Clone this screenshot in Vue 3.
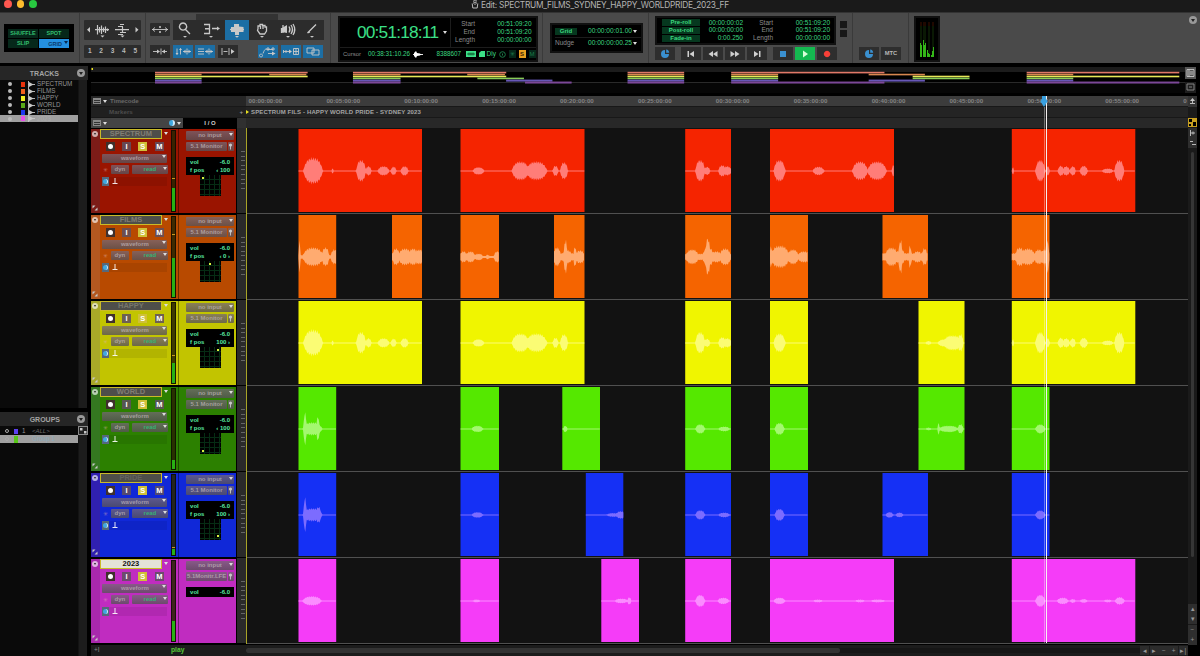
<template>
  <div class="app">
    <header class="titlebar">
      <div class="lights"><i class="close"></i><i class="min"></i><i class="max"></i></div>
      <div class="title">
        <svg width="8" height="9" viewBox="0 0 8 9"><path d="M2 1.5 L3 .7 L6 1 M2 3.2 Q4 1.8 6 3.2 M1.2 3.5 L1.8 8 H6.2 L6.8 3.5 M4 3.6 V5" class="ln" /></svg>
        <span>Edit: SPECTRUM_FILMS_SYDNEY_HAPPY_WORLDPRIDE_2023_FF</span>
      </div>
    </header>

    <section class="toolbar">
      <div class="sec sec-modes">
        <div class="modes">
          <div class="mode">SHUFFLE</div>
          <div class="mode">SPOT</div>
          <div class="mode">SLIP</div>
          <div class="mode on">GRID<b class="caret dark"></b></div>
        </div>
      </div>

      <div class="sec sec-zoom">
        <div class="panel zoom-row">
          <svg width="57" height="19" viewBox="0 0 57 19">
            <path d="M6 7 L3 9.7 L6 12.4Z M51.5 7 L54.5 9.7 L51.5 12.4Z M16.5 15.5 h4 l-2 2Z M36.5 15.5 h4 l-2 2Z" class="fl" />
            <path d="M11 9.7 H25 M13.5 5 V14.5 M15.5 7 V12.5 M17.5 5.5 V14 M19.5 7.5 V12 M21.5 6.5 V13 M23.5 8.5 V11" class="ln heavy" />
            <path d="M31 9.7 H45 M34 6.5 H39 M36 4.5 H40 M36 12.5 H42 M34 14.5 H39 M38.5 7 V12" class="ln heavy" />
          </svg>
        </div>
        <div class="panel presets"><span v-for="n in 5" :key="n">{{ n }}</span></div>
      </div>

      <div class="sec sec-tools">
        <div class="tool-row">
          <div class="panel zoomer">
            <svg width="20" height="13" viewBox="0 0 20 13"><path d="M2 6.5 H18 M5 4.5 L2.5 6.5 L5 8.5 M15 4.5 L17.5 6.5 L15 8.5" class="ln" /><circle cx="10" cy="4" r="1" class="fl" /><circle cx="10" cy="9" r="1" class="fl" /></svg>
          </div>
          <div class="tools">
            <div v-for="t in tools" :key="t.name" class="tool" :class="[t.name, { on: t.on }]">
              <svg width="22" height="19" viewBox="0 0 22 19">
                <path :d="t.line" class="ln thick" />
                <path v-if="t.fill" :d="t.fill" class="fl" />
                <path d="M9 16 h4 l-2 1.8Z" class="fl" />
              </svg>
            </div>
          </div>
        </div>
        <div class="option-row">
          <div v-for="(o, i) in options" :key="i" class="option" :class="{ on: o.on, gap: i === 4 }">
            <svg width="20" height="13" viewBox="0 0 20 13">
              <path :d="o.line" class="ln" />
              <path v-if="o.fill" :d="o.fill" class="fl" />
            </svg>
          </div>
        </div>
      </div>

      <div class="sec sec-counter">
        <div class="counter">
          <div class="counter-top">
            <div class="main-time">00:51:18:11<b class="caret"></b></div>
            <div class="range">
              <span>Start</span><em>00:51:09:20</em>
              <span>End</span><em>00:51:09:20</em>
              <span>Length</span><em>00:00:00:00</em>
            </div>
          </div>
          <div class="counter-bottom">
            <span class="dim">Cursor</span>
            <em class="cursor-time">00:38:31:10.26</em>
            <svg width="11" height="7" viewBox="0 0 11 7"><path d="M0 3.5 H10" class="ln white" /><path d="M1 2 L3 0 L4 2 L7 2.5 L8 3.5 L7 4.5 L4 5 L3 7 L1 5Z" class="fl white" /></svg>
            <em class="samples">8388607</em>
            <i class="chip"><svg width="10" height="6" viewBox="0 0 10 6"><path d="M1 3 H9 M3 1.5 V4.5 M5 1.5 V4.5 M7 1.5 V4.5" /></svg></i>
            <i class="chip page"></i>
            <em class="dly">Dly</em>
            <svg width="7" height="7" viewBox="0 0 7 7"><circle cx="3.5" cy="3.5" r="2.8" class="gr" /><path d="M3.5 2.5 V4.5" class="gr" /></svg>
            <i class="flag">✳</i>
            <i class="flag solo">S</i>
            <i class="flag">M</i>
          </div>
        </div>
      </div>

      <div class="sec sec-grid">
        <div class="grid-box">
          <div class="grid-line"><b class="pill">Grid</b><em>00:00:00:01.00</em><b class="caret"></b></div>
          <div class="grid-line"><span>Nudge</span><em>00:00:00:00.25</em><b class="caret"></b></div>
        </div>
      </div>

      <div class="sec sec-transport">
        <div class="roll-row">
          <div class="roll">
            <b>Pre-roll</b><em>00:00:00:02</em><span>Start</span><em>00:51:09:20</em>
            <b>Post-roll</b><em>00:00:00:00</em><span>End</span><em>00:51:09:20</em>
            <b>Fade-in</b><em>0:00.250</em><span>Length</span><em>00:00:00:00</em>
          </div>
          <div class="squares"><i></i><i></i></div>
        </div>
        <div class="transport">
          <div v-for="b in transport" :key="b.name" class="tbtn" :class="b.name">
            <svg width="12" height="10" viewBox="0 0 12 10"><path :d="b.d" /></svg>
          </div>
        </div>
      </div>

      <div class="sec sec-mtc">
        <div class="tbtn sync"><svg width="12" height="10" viewBox="0 0 12 10"><path :d="clock" /></svg></div>
        <div class="tbtn">MTC</div>
      </div>

      <div class="sec sec-meter">
        <div class="out-meter">
          <i v-for="(h, i) in outLevels" :key="i"><u :style="{ height: h + 'px' }"></u></i>
        </div>
        <div class="round"><b class="caret"></b></div>
      </div>
    </section>

    <main class="main">
      <aside class="sidebar">
        <div class="side-col tracks-col">
          <div class="side-head">TRACKS<div class="round"><b class="caret"></b></div></div>
          <div class="side-list">
            <div v-for="t in tracks" :key="t.name" class="side-item" :class="{ sel: t.selected }">
              <i class="dot"></i>
              <i class="swatch" :style="{ background: t.list }"></i>
              <svg width="7" height="7" viewBox="0 0 7 7"><path d="M.5 0 V7 M0 3.5 H7" class="ln" /><path d="M1 1 L5.5 3.5 L1 6Z" class="fl" /></svg>
              <span>{{ t.name }}</span>
            </div>
          </div>
        </div>
        <div class="side-col groups-col">
          <div class="side-head">GROUPS<div class="round"><b class="caret"></b></div></div>
          <div class="group-wrap">
            <div class="side-list">
              <div class="side-item group"><i class="ring"></i><i class="swatch violet"></i><span class="key">1</span><span class="all">&lt;ALL&gt;</span></div>
              <div class="side-item group sel"><i class="ring"></i><i class="swatch green"></i><span class="key"></span><span class="g1">Group 1</span></div>
            </div>
            <svg class="az" width="10" height="9" viewBox="0 0 10 9"><rect x=".5" y=".5" width="9" height="8" class="box" /><path d="M2 2 h2.5 v2.5 h-2.5Z M6 5 h2.5 v2.5 h-2.5Z" class="fl" /></svg>
          </div>
        </div>
      </aside>

      <section class="edit">
        <div class="overview">
          <svg width="1094" height="26" viewBox="91 67 1094 26">
            <rect x="91" y="67" width="1094" height="5" class="ov-top" />
            <rect x="91" y="82" width="1094" height="11" class="ov-low" />
            <path d="M91 82.5 H1185" class="ov-line" />
            <path d="M91.5 68 h1.500 v2 h-1.500Z" class="ov-mark" />
            <template v-for="(t, i) in tracks" :key="t.name">
              <rect
                v-for="c in t.clips"
                :key="c.x"
                :x="overviewX(c.x)"
                :y="71.8 + i * 1.95"
                :width="c.w * overviewScale"
                :height="i > 3 ? 2 : 1.6"
                :fill="t.mini"
              />
            </template>
          </svg>
          <div class="ov-buttons">
            <div class="ov-btn"><svg width="11" height="12" viewBox="0 0 11 12"><path d="M2 2.5 H9 V9.5 H2Z M4 2.5 V9.5 M5 5 H8 M5 7 H8" class="ln" /></svg></div>
            <div class="ov-btn off"><svg width="11" height="10" viewBox="0 0 11 10"><path d="M2 2 H9 V8 H2Z M4 5 H7" class="ln" /></svg></div>
          </div>
        </div>

        <div class="workspace">
          <div class="board">
            <div class="ruler-row">
              <div class="ruler-name"><i class="listicon"></i><b class="caret"></b><span>Timecode</span></div>
              <div class="ticks"><span v-for="r in ruler" :key="r">{{ r }}</span></div>
            </div>
            <div class="ruler-row markers">
              <div class="ruler-name"><span>Markers</span><em>+</em></div>
              <div class="marker"><i></i><span>SPECTRUM FILS - HAPPY WORLD PRIDE - SYDNEY 2023</span></div>
            </div>
            <div class="head-row">
              <div class="head-left"><i class="listicon"></i><b class="caret"></b><i class="clock"></i><b class="caret"></b></div>
              <div class="head-io">I / O</div>
              <div class="head-rest"></div>
            </div>

            <div v-for="t in tracks" :key="t.name" class="track" :class="t.cls">
              <div class="strip">
                <div class="round small"><b class="caret"></b></div>
                <svg width="6" height="6" viewBox="0 0 6 6"><path d="M.5 .5 h3 l-3 3Z M5.5 5.5 h-3 l3 -3Z" class="fl" /></svg>
              </div>
              <div class="controls">
                <div class="name-row"><div class="name">{{ t.name }}</div><b class="caret"></b></div>
                <div class="rec-row">
                  <div class="sq rec"><i></i></div>
                  <div class="sq">I</div>
                  <div class="sq solo">S</div>
                  <div class="sq">M</div>
                </div>
                <div class="soft view">waveform<b class="caret"></b></div>
                <div class="auto-row">
                  <i class="star">✳</i>
                  <div class="soft dyn">dyn</div>
                  <div class="soft read">read<b class="caret"></b></div>
                </div>
                <div class="elastic">
                  <i class="clock-box"><i class="clock"></i></i>
                  <svg width="6" height="7" viewBox="0 0 6 7"><path d="M3 0 V5 M.5 5.5 H5.5" class="ln white" /></svg>
                </div>
              </div>
              <div class="meter">
                <div class="meter-bar">
                  <i class="peak" :style="{ top: t.peak + 'px' }"></i>
                  <i class="level" :style="{ height: t.level + 'px' }"></i>
                </div>
              </div>
              <div class="io">
                <div class="soft io-btn">no input<b class="caret"></b></div>
                <div class="io-out"><div class="soft io-btn">{{ t.output }}</div><div class="soft pin"><svg width="5" height="7" viewBox="0 0 5 7"><path d="M2.5 3 V6.5" class="ln" /><circle cx="2.5" cy="2" r="1.6" class="fl" /></svg></div></div>
                <div class="lcd">
                  <div><span>vol</span><span>-6.0</span></div>
                  <div v-if="t.pan"><span>f pos</span><span>{{ t.pan }}</span></div>
                </div>
                <div v-if="t.pan" class="panner"><i :style="{ left: t.px + 'px', top: t.py + 'px' }"></i></div>
              </div>
              <div class="scale"><i></i></div>
              <svg class="lane" width="942" height="86" viewBox="246 0 942 86">
                <g v-for="c in t.clips" :key="c.x">
                  <rect :x="c.x" y="1" :width="c.w" height="83" :fill="t.clip" />
                  <path :d="wave(c)" :fill="t.wave" />
                </g>
                <path d="M246 85.5 H1188" class="lane-line" />
                <path d="M246.5 0 V86" class="start-line" />
              </svg>
            </div>

            <div class="footer">
              <div class="foot-plus">+I</div>
              <div class="play">play</div>
              <div class="hscroll"><i></i></div>
              <div class="foot-btns"><span>◂</span><span>▸</span><span>−</span><span>+</span><span>▸|</span></div>
            </div>
            <div class="playhead">
              <svg width="8" height="11" viewBox="0 0 8 11"><path d="M2 0 H6 V2.5 L7.5 5.5 L4 11 L.5 5.5 L2 2.5Z" /></svg>
            </div>
          </div>

          <div class="rail">
            <div class="rail-top"><svg width="9" height="10" viewBox="0 0 9 10"><path d="M4.5 2 L7 5 H2Z" class="fl" /><path d="M4.5 4 V7 M2 7.5 H7" class="ln" /></svg></div>
            <svg class="rail-key" width="9" height="9" viewBox="0 0 9 9"><rect width="9" height="9" /><path d="M1 1 h3 v3 h-3Z M5 4 h3 v4 h-3Z M1 6 h2 v2 h-2Z" /></svg>
            <div class="rail-btn"><svg width="9" height="10" viewBox="0 0 9 10"><path d="M2.5 2 V8 M2.5 5 H7 M5 3.5 V6.500" class="ln" /></svg></div>
            <div class="rail-btn"><svg width="9" height="10" viewBox="0 0 9 10"><path d="M2 3.500 H5 M4 6.500 H8" class="ln" /></svg></div>
            <div class="vscroll"><i></i></div>
            <div class="rail-btn">▴</div>
            <div class="rail-btn">▾</div>
            <div class="rail-btn">−</div>
            <div class="rail-btn">+</div>
          </div>
        </div>
      </section>
    </main>
  </div>
</template>

<script setup>
const clock = "M6 1 A4 4 0 1 0 10 5 H6Z M7.2 .6 A3.5 3.5 0 0 1 10.2 3.8 H7.2Z";

const tools = [
  { name: "magnify", line: "M9 3 a3.6 3.6 0 1 0 .1 0Z M11.5 9.5 L16 14" },
  { name: "trim", line: "M4 4.5 H9.5 V13.5 H4 M17 8.5 H12", fill: "M17 6.5 L20 8.5 L17 10.5Z M5 8 H9 V9.5 H5Z" },
  { name: "select", line: "M4 9.5 H18", fill: "M5 7 H8 V4 H13 V6.5 L17.5 7 V12 H13 V15 H9 V12 H5Z", on: true },
  { name: "grab", line: "M7 9 V6 H9 V4.5 H11.5 V5.5 H14 V7 H15.5 V11 L13.5 14 H9 L6.5 10.5 L7 9 M9.5 6 V9 M12 6 V9" },
  { name: "scrub", line: "M6 5 V13 M8 7 V12 M4.5 8 V13 M12 6.5 Q14 9.5 12 12.5 M14 5 Q17 9.5 14 14 M16 4 Q19.5 9.5 16 15", fill: "M5 8 L10 5 V13 L5 12Z" },
  { name: "pencil", line: "M6.500 13 L15 4.500 M6.500 13 L9 12" },
];

const options = [
  { line: "M3 6.5 H8 M12 6.5 H17 M11 3.5 V9.5", fill: "M7 4.5 L10 6.5 L7 8.5Z M15 4.5 L12 6.5 L15 8.5Z" },
  { line: "M4 3.5 V9.5 M7.5 3.5 V9.5 M14 3.5 V9.5 M10 6.5 H18", fill: "M2.5 8 H5.5 L4 10Z M6 5 H9 L7.5 3Z M12.5 4.5 V8.5 L10.5 6.5Z M15.5 4.5 V8.5 L17.5 6.5Z", on: true },
  { line: "M3 4 H9 M3 6.5 H9 M3 9 H9 M14 3.5 V9.5 M10 6.5 H18", fill: "M12.5 4.5 V8.5 L10.5 6.5Z M15.5 4.5 V8.5 L17.5 6.5Z", on: true },
  { line: "M4 3 V10 M11 3 V10 M5.5 6.5 H9.5", fill: "M13 4 L16.5 6.5 L13 9Z" },
  { line: "M3 9 a1.5 1.5 0 1 0 .1 0 M5 8.5 C7 3 8 4 9.5 4.5 H15 M9 3 h2 v2 h-2Z M14 3 h2 v2 h-2Z M10 8.5 H16", fill: "M14 6.5 L17.5 8.5 L14 10.5Z", on: true },
  { line: "M2.5 6.5 H9 M2.5 5 V8 M5 5 V8 M12.5 3.5 h5 v6 h-5Z M12.5 6.5 h5 M15 3.5 v6", fill: "M8 4.5 L11 6.5 L8 8.5Z", on: true },
  { line: "M4 3 H11 V8 H4Z M9 5 H16 V10 H9Z", on: true },
];

const transport = [
  { name: "sync", d: clock },
  { name: "start", d: "M2.5 2 H4 V8 H2.5Z M9 2 V8 L4.5 5Z" },
  { name: "rew", d: "M6 2 V8 L1.5 5Z M10.5 2 V8 L6 5Z" },
  { name: "ffw", d: "M1.5 2 L6 5 L1.5 8Z M6 2 L10.5 5 L6 8Z" },
  { name: "end", d: "M3 2 L7.5 5 L3 8Z M8 2 H9.5 V8 H8Z" },
  { name: "stop", d: "M3 2 H9 V8 H3Z" },
  { name: "playbtn", d: "M4 1.5 L9 5 L4 8.5Z" },
  { name: "record", d: "M6 1.8 a3.2 3.2 0 1 0 .1 0Z" },
];

const outLevels = [14, 12, 17, 12, 14, 7, 4, 3, 2, 6, 10];

const ruler = [];
for (let m = 0; m < 60; m += 5) {
  ruler.push(`00:${String(m).padStart(2, "0")}:00:00`);
}
ruler.push("0");

// Each peak is [offset from the clip start, half width, amplitude]
const clip = (x, end, peaks, base = 0.5) => ({ x, w: end - x, peaks, base });

const phraseA = [[14.5, 10, 14], [34, 1, 3], [62.5, 5, 11.5], [70, 3, 5], [85, 6, 5], [95, 3, 4.5], [106, 4, 5]];
const phraseB = [[18, 6, 4], [60, 9, 10], [76, 11, 10], [95, 3, 5.5], [103.5, 4, 9]];
const phraseC = [[15, 5, 11.5], [22, 3, 4.5], [37, 4, 6], [42, 4, 5], [46, 1, 4]];
const phraseE = [[1, 1, 4], [28.5, 5, 11.5], [36, 2, 5], [49, 3, 5.5], [54.5, 3.5, 5], [61, 3, 5], [72, 4, 5.5], [96, 6, 2.5], [107.5, 5, 11.5]];

const tracks = [
  {
    name: "SPECTRUM", cls: "red", list: "#e8320c", clip: "#f52400", wave: "#ff7d78", mini: "#e07868",
    level: 23, peak: 47, output: "5.1 Monitor", pan: "‹ 100", px: 2, py: 2,
    clips: [
      clip(298.5, 422, phraseA),
      clip(460.5, 584.5, phraseB),
      clip(685.2, 731, phraseC),
      clip(770, 894, [[9.5, 6, 11.5], [48.5, 6, 4.5], [90, 8, 10], [107, 10, 10], [123.5, 2, 6]]),
      clip(1011.8, 1135.3, phraseE),
    ],
  },
  {
    name: "FILMS", cls: "orange", list: "#f0601c", clip: "#f56400", wave: "#ffab70", mini: "#d88850",
    level: 39, peak: 17, output: "5.1 Monitor", pan: "‹ 0 ›", px: 9, py: 2,
    clips: [
      clip(298.5, 336.2, [[1, 1, 17], [14.5, 11, 10], [27, 4, 10], [36, 4, 8]], 2),
      clip(392, 422, [[4, 4, 9], [13, 7, 9], [21, 5, 9], [27, 6, 8]], 4),
      clip(460.5, 499, [[3, 4, 6], [10, 5, 6], [18, 5, 3.5], [27, 2, 2.5], [37, 4, 6]], 1),
      clip(554, 584.5, [[3, 4, 10], [11.5, 1.8, 18], [13, 6, 7], [21, 1.5, 11], [26, 5, 7]], 4),
      clip(685.2, 731, [[7, 7, 8], [23, 6, 10], [22.5, 2.5, 20], [31, 6, 6], [40, 6, 9]], 3.5),
      clip(770, 808, [[1, 1.5, 11], [10, 10, 12], [23, 6, 8], [34, 7, 6]], 3),
      clip(882.5, 928, [[9, 7, 10], [18, 2, 18], [18, 5, 8], [27.5, 1.5, 12], [35, 5, 6], [42, 3, 9]], 4),
      clip(1011.8, 1049.5, [[8, 5, 10], [16, 8, 9], [27, 5, 8], [35.5, 1.8, 18], [33, 5, 8]], 4),
    ],
  },
  {
    name: "HAPPY", cls: "yellow", list: "#f0ee20", clip: "#f0f500", wave: "#fbfc74", mini: "#e8e858",
    level: 20, peak: 52, output: "5.1 Monitor", pan: "100 ›", px: 17, py: 2,
    clips: [
      clip(298.5, 422, phraseA),
      clip(460.5, 584.5, phraseB),
      clip(685.2, 731, phraseC),
      clip(770, 808, [[9.5, 6, 10]]),
      clip(918.5, 964.5, [[10, 3, 2], [26, 7, 4], [34, 10, 8], [42, 3, 9]]),
      clip(1011.8, 1135.3, phraseE),
    ],
  },
  {
    name: "WORLD", cls: "lime", list: "#58a818", clip: "#55e800", wave: "#a4f870", mini: "#88cc58",
    level: 9, peak: 71, output: "5.1 Monitor", pan: "‹ 100", px: 2, py: 17,
    clips: [
      clip(298.5, 336.2, [[14, 10, 7], [6.5, 1.7, 17], [19.5, 1.7, 13]]),
      clip(460.5, 499, [[17, 6, 3.5]]),
      clip(562.3, 600, [[3, 2, 3.5]]),
      clip(685.2, 731, [[15, 5, 5], [39, 6, 2.5]]),
      clip(770, 808, [[9.5, 5, 6.5]]),
      clip(918.5, 964.5, [[10, 3, 1.5], [20, 1.2, 6], [30, 10, 3.5], [42, 3, 5]]),
      clip(1011.8, 1049.5, [[28.5, 5, 5]]),
    ],
  },
  {
    name: "PRIDE", cls: "blue", list: "#2038f0", clip: "#1530f5", wave: "#7c6cff", mini: "#6858b8",
    level: 6, peak: 72, output: "5.1 Monitor", pan: "100 ›", px: 17, py: 16,
    clips: [
      clip(298.5, 336.2, [[14, 10, 7], [6.5, 1.7, 18], [20, 3, 8.5]]),
      clip(460.5, 499, [[17, 6, 3]]),
      clip(585.8, 623.3, [[28, 8, 2], [35, 5, 4]]),
      clip(685.2, 731, [[15, 5, 5], [39, 6, 2.5]]),
      clip(770, 808, [[9.5, 5, 6.5]]),
      clip(882.5, 928, [[7, 4, 3], [17, 4, 2.5]]),
      clip(1011.8, 1049.5, [[28.5, 5, 5]]),
    ],
  },
  {
    name: "2023", cls: "pink", list: "#e850e8", clip: "#f53cf8", wave: "#fb8cff", mini: "#7c4898", selected: true,
    level: 20, peak: 61, output: "5.1Monitr.LFE", pan: "",
    clips: [
      clip(298.5, 336.2, [[13.5, 10, 5]]),
      clip(460.5, 499, [[16, 4, 1.5]]),
      clip(601.3, 639, [[20, 7, 2.5], [28, 2, 4]]),
      clip(685.2, 731, [[15, 5, 6.5], [38, 6, 3.5]]),
      clip(770, 894, [[9.5, 6, 3.5], [48, 5, 1.5], [90, 5, 1.5], [108, 8, 1.5]]),
      clip(1011.8, 1135.3, [[28.5, 5, 6.5], [51, 6, 3.5], [61, 3, 2], [72, 4, 2], [96, 4, 1.5], [108, 5, 4]]),
    ],
  },
];

const overviewScale = 1.236;
const overviewX = (x) => 155 + (x - 298.5) * 1.222;

// Builds the mirrored envelope of a clip around the middle of the lane
function wave(c) {
  const up = [];
  const down = [];
  for (let d = 0; d <= c.w; d += 0.75) {
    let amp = c.base;
    for (const [at, half, height] of c.peaks) {
      const k = Math.abs(d - at) / half;
      if (k < 1) amp = Math.max(amp, height * (1 - k * k * k));
    }
    const noise = 0.86 + 0.14 * Math.sin(d * 5.3 + c.x);
    const a = amp > 1 ? amp * noise : amp;
    const x = (c.x + d).toFixed(1);
    up.push(`${x} ${(43 - a).toFixed(1)}`);
    down.unshift(`${x} ${(43 + a * 0.96).toFixed(1)}`);
  }
  return `M${up.join("L")}L${down.join("L")}Z`;
}
</script>

<style>
body {
  background: #000;
}
</style>

<style scoped>
* {
  box-sizing: border-box;
}

i,
em {
  font-style: normal;
}

svg {
  display: block;
  flex: none;
}

.app {
  width: 1200px;
  height: 656px;
  background: #000;
  color: #b8b8b8;
  font-family: "Liberation Sans", Arial, sans-serif;
  font-size: 6.5px;
  line-height: 1;
  overflow: hidden;
  position: relative;
  white-space: nowrap;
}

.ln {
  fill: none;
  stroke: #c8c8c8;
  stroke-width: 0.9;
}

.ln.thick {
  stroke-width: 1.3;
}

.ln.heavy {
  stroke-width: 1.2;
}

.ln.white {
  stroke: #fff;
}

.fl {
  fill: #c8c8c8;
}

.fl.white {
  fill: #fff;
}

.gr {
  fill: none;
  stroke: #1c7a48;
}

.caret {
  width: 0;
  height: 0;
  border: 2.3px solid transparent;
  border-top: 3px solid #ddd;
  border-bottom: 0;
  flex: none;
}

.caret.dark {
  border-top-color: #0a2a50;
}

.round {
  width: 8px;
  height: 8px;
  border-radius: 50%;
  background: #999;
  display: flex;
  align-items: center;
  justify-content: center;
  flex: none;
}

.round .caret {
  border-top-color: #222;
}

.round.small {
  width: 6px;
  height: 6px;
}

/* title bar */
.titlebar {
  height: 12px;
  background: #1a1a1a;
  display: flex;
  align-items: flex-start;
}

.lights {
  width: 471px;
  padding-left: 4px;
  display: flex;
  gap: 5px;
}

.lights i {
  width: 7.5px;
  height: 8px;
  border-radius: 50%;
}

.close {
  background: #ff5850;
}

.min {
  background: #febc2e;
}

.max {
  background: #28c840;
}

.title {
  display: flex;
  gap: 2px;
  font-family: Inter, "Liberation Sans", sans-serif;
  font-size: 8.3px;
  letter-spacing: -0.24px;
  line-height: 10px;
  color: #b4b4b4;
}

/* toolbar */
.toolbar {
  height: 51px;
  background: #4a4a4a;
  display: flex;
  border-top: 1px solid #333;
}

.sec {
  border-right: 1px solid #3a3a3a;
  flex: none;
}

.panel {
  background: #2c2c2c;
  border-radius: 1px;
}

.sec-modes {
  width: 80px;
  padding: 11px 0 0 4px;
}

.modes {
  width: 70px;
  height: 28px;
  background: #000;
  display: grid;
  grid-template-columns: 30px 30px;
  grid-template-rows: 9px 9px;
  gap: 1px;
  padding: 5px 4px;
  font-size: 5.5px;
  font-weight: bold;
  color: #34c070;
}

.mode {
  background: #06281a;
  text-align: center;
  line-height: 9px;
}

.mode.on {
  background: #2490e0;
  color: #0c3a68;
  display: flex;
  justify-content: flex-end;
  gap: 2px;
  padding: 2px 1px 0 0;
  line-height: 6px;
}

.sec-zoom {
  width: 66px;
  padding: 7px 0 0 4px;
}

.zoom-row {
  width: 57px;
  height: 20px;
}

.presets {
  width: 57px;
  height: 13px;
  margin-top: 5px;
  display: flex;
  justify-content: space-around;
  align-items: center;
  font-weight: bold;
}

.sec-tools {
  width: 185px;
  padding: 1px 0 0 4px;
}

.tool-row {
  display: flex;
  gap: 3px;
}

.zoomer {
  width: 20px;
  height: 13px;
  margin-top: 9px;
}

.tools {
  width: 151px;
  height: 26px;
  display: flex;
  padding-top: 6px;
  background: linear-gradient(90deg, transparent 23px, #333 23px, #333 105px, transparent 105px);
}

.tool {
  width: 24px;
  height: 20px;
  background: #2c2c2c;
  display: flex;
  justify-content: center;
}

.tool.trim,
.tool.grab {
  width: 28px;
}

.tool.on {
  background: #1c6ea4;
}

.option-row {
  display: flex;
  gap: 2.5px;
  margin-top: 5px;
}

.option {
  width: 20px;
  height: 13px;
  background: #2c2c2c;
}

.option.on {
  background: #1c6ea4;
}

.option.gap {
  margin-left: 18px;
}

.sec-counter {
  width: 212px;
  padding: 3px 0 0 7px;
}

.counter,
.grid-box,
.roll,
.out-meter {
  background: #000;
  border: 2px solid #111;
}

.counter {
  width: 200px;
  height: 46px;
}

.counter em,
.grid-box em,
.roll em {
  color: #3cd880;
}

.counter-top {
  height: 29px;
  display: flex;
}

.main-time {
  width: 111px;
  padding-left: 17px;
  display: flex;
  align-items: center;
  gap: 5px;
  color: #3ce088;
  font-size: 17.3px;
  letter-spacing: -0.8px;
  border-right: 1px solid #1c1c1c;
}

.range {
  width: 80.5px;
  display: grid;
  grid-template-columns: 24px 1fr;
  grid-auto-rows: 7.8px;
  padding-top: 3px;
  text-align: right;
  color: #8c8c8c;
}

.counter-bottom {
  height: 13px;
  border-top: 1px solid #1c1c1c;
  display: flex;
  align-items: center;
  padding-left: 3px;
}

.counter-bottom .dim {
  width: 25px;
  font-size: 6px;
  color: #8c8c8c;
}

.cursor-time {
  width: 45px;
  font-size: 6.3px;
}

.samples {
  width: 37px;
  text-align: right;
  font-size: 6.3px;
  margin-right: 5px;
}

.chip {
  width: 10px;
  height: 6px;
  background: #3ce088;
  margin-right: 3px;
}

.chip path {
  stroke: #003818;
  stroke-width: 0.7;
  fill: none;
}

.chip.page {
  width: 6px;
  clip-path: polygon(35% 0, 100% 0, 100% 100%, 0 100%, 0 35%);
  margin-right: 1.5px;
}

.dly {
  width: 12px;
}

.flag {
  width: 7px;
  height: 8px;
  margin-left: 3px;
  background: #06281a;
  color: #1c7a48;
  font-size: 6px;
  line-height: 8px;
  text-align: center;
}

.flag.solo {
  background: #e8a020;
  color: #3a2400;
  font-weight: bold;
}

.sec-grid {
  width: 106px;
  padding: 10px 0 0 7px;
}

.grid-box {
  width: 93px;
  height: 30px;
  padding: 1px 0 0 3px;
}

.grid-line {
  height: 11px;
  display: grid;
  grid-template-columns: 22px 54px 6px;
  gap: 1px;
  align-items: center;
  color: #8c8c8c;
}

.grid-line + .grid-line {
  border-top: 1px solid #1c1c1c;
}

.grid-line em {
  text-align: right;
  font-size: 6.6px;
}

.pill,
.roll b {
  background: #06381f;
  color: #3cd880;
  font-size: 6px;
  text-align: center;
  line-height: 7px;
}

.sec-transport {
  width: 204px;
  padding: 3px 0 0 6px;
}

.roll-row {
  display: flex;
  gap: 4px;
}

.roll {
  width: 181px;
  height: 29px;
  display: grid;
  grid-template-columns: 38px 43px 30px 1fr;
  grid-auto-rows: 7.7px;
  padding: 1px 4px 0 5px;
  text-align: right;
  align-items: center;
  color: #8c8c8c;
}

.squares {
  display: flex;
  flex-direction: column;
  gap: 2px;
  padding-top: 5px;
}

.squares i {
  width: 7px;
  height: 7px;
  background: #181818;
}

.transport {
  display: flex;
  gap: 2px;
  margin-top: 2px;
}

.tbtn {
  width: 20px;
  height: 13px;
  background: #2e2e2e;
  display: flex;
  align-items: center;
  justify-content: center;
  font-weight: bold;
  font-size: 5.8px;
}

.tbtn path {
  fill: #d0d0d0;
}

.tbtn.sync path,
.tbtn.stop path {
  fill: #3a90d0;
}

.transport .sync,
.transport .end {
  margin-right: 4px;
}

.tbtn.playbtn {
  background: #14b850;
}

.tbtn.playbtn path {
  fill: #d8ffd8;
}

.tbtn.record path {
  fill: #f84038;
}

.sec-mtc {
  width: 56px;
  display: flex;
  gap: 2px;
  padding: 34px 0 0 6px;
}

.sec-meter {
  flex: 1;
  display: flex;
  justify-content: space-between;
  padding: 3px 3px 0 5px;
  border: 0;
}

.out-meter {
  width: 26px;
  height: 46px;
  padding: 4px 4px 3px;
  display: flex;
  gap: 0.4px;
}

.out-meter i {
  flex: 1;
  display: flex;
  align-items: flex-end;
  background: linear-gradient(#200800 0 4px, #0a1804 4px);
}

.out-meter u {
  width: 100%;
  background: #34b818;
}

/* lists on the left */
.main {
  height: 593px;
  padding: 3px 3px 0 0;
  display: flex;
  gap: 3px;
}

.sidebar {
  width: 88px;
  background: linear-gradient(90deg, #0a0a0a 78px, #1c1c1c 79px, #1c1c1c 87px, #000 87px);
}

.tracks-col {
  height: 346px;
  border-bottom: 4px solid #000;
}

.side-head {
  height: 14px;
  background: #262626;
  display: flex;
  align-items: center;
  justify-content: flex-end;
  gap: 18px;
  padding-right: 3px;
  font-size: 7px;
  font-weight: bold;
  color: #a4a4a4;
}

.side-list {
  width: 78px;
  padding-top: 1px;
}

.side-item {
  height: 6.9px;
  display: flex;
  align-items: center;
  padding-left: 8px;
  font-size: 6.3px;
  color: #949494;
}

.side-item.sel {
  background: #a0a0a0;
}

.side-item.sel span {
  color: #acacac;
}

.dot {
  width: 4px;
  height: 4px;
  border-radius: 50%;
  background: #bbb;
}

.swatch {
  width: 4px;
  height: 5px;
  margin: 0 3.5px 0 8.5px;
}

.side-item span {
  margin-left: 2px;
}

.side-item.group {
  height: 8px;
  padding-left: 5px;
}

.ring {
  width: 4px;
  height: 4px;
  border-radius: 50%;
  border: 1px solid #aaa;
}

.group .swatch {
  margin: 0 2px 0 5px;
}

.swatch.violet {
  background: #5c40f0;
}

.swatch.green {
  background: #58c818;
  height: 7px;
}

.key {
  width: 8px;
}

.side-item .all {
  font-size: 6px;
  color: #6c6c6c;
  font-style: italic;
}

.side-item.sel .g1 {
  color: #8cacbc;
}

.groups-col .side-head {
  gap: 17px;
}

.group-wrap {
  display: flex;
}

.az .box {
  fill: #222;
  stroke: #888;
}

/* overview */
.edit {
  flex: 1;
}

.overview {
  height: 30px;
  display: flex;
  padding-top: 1px;
}

.ov-top {
  fill: #1c1c1c;
}

.ov-low {
  fill: #060606;
}

.ov-line {
  stroke: #2a2a2a;
}

.ov-mark {
  fill: #e8e020;
}

.ov-buttons {
  display: flex;
  flex-direction: column;
  gap: 3px;
}

.ov-btn {
  width: 11px;
  height: 12px;
  background: #555;
}

.ov-btn.off {
  height: 11px;
  background: #2c2c2c;
  opacity: 0.7;
}

/* rulers */
.workspace {
  display: flex;
}

.board {
  width: 1097px;
  position: relative;
}

.ruler-row {
  height: 11px;
  background: #2e2e2e;
  display: flex;
  border-bottom: 1px solid #181818;
}

.ruler-name {
  width: 155px;
  background: #262626;
  display: flex;
  align-items: center;
  gap: 2px;
  padding-left: 2px;
  color: #686868;
  font-size: 6.2px;
  font-weight: bold;
}

.ruler-name span {
  margin-left: 1px;
}

.listicon {
  width: 8px;
  height: 6px;
  border: 1px solid #888;
  background: repeating-linear-gradient(#888 0 1px, #333 1px 2px);
}

.ticks {
  flex: 1;
  display: flex;
  overflow: hidden;
  background: #3c3c3c;
}

.ticks span {
  width: 77.9px;
  padding-left: 2.5px;
  flex: none;
  font-size: 6.2px;
  font-weight: bold;
  line-height: 10px;
  color: #848484;
}

.ticks span:last-child {
  width: 7px;
}

.ruler-row.markers {
  background: #242424;
}

.markers .ruler-name {
  background: #202020;
  padding-left: 17px;
  justify-content: space-between;
  color: #4c4c4c;
}

.markers em {
  color: #999;
  padding-right: 3px;
}

.marker {
  display: flex;
  align-items: center;
  gap: 2px;
  font-size: 6px;
  letter-spacing: 0.14px;
  font-weight: bold;
  color: #a4a4a4;
}

.marker i {
  border: 2.5px solid transparent;
  border-left: 3px solid #e8e020;
  border-right: 0;
}

.head-row {
  height: 10px;
  display: flex;
  background: #242424;
}

.head-left {
  width: 92px;
  background: #444;
  display: flex;
  align-items: center;
  gap: 2px;
  padding-left: 2px;
}

.clock {
  width: 6px;
  height: 6px;
  border-radius: 50%;
  background: #40a8e0;
  border-right: 2px solid #d0e8f8;
}

.head-left .clock {
  margin-left: 60px;
}

.head-io {
  width: 54px;
  background: #000;
  color: #d0d0d0;
  font-weight: bold;
  font-size: 6px;
  line-height: 10px;
  text-align: center;
}

.head-rest {
  flex: 1;
  border-left: 9px solid #303030;
  background: #282828;
}

/* tracks */
.track {
  height: 86px;
  display: flex;
  background: #000;
}

.strip,
.controls,
.meter,
.io {
  height: 84px;
  margin-top: 0.5px;
  background: var(--body);
}

.strip {
  width: 9px;
  background: var(--side);
  display: flex;
  flex-direction: column;
  align-items: center;
  justify-content: space-between;
  padding: 2px 0;
}

.strip .round {
  background: rgba(255, 255, 255, 0.65);
}

.strip .caret {
  border-width: 2.5px 1.7px 0;
}

.controls {
  width: 71px;
}

.name-row {
  height: 12px;
  display: flex;
  gap: 2px;
  padding-top: 0.5px;
}

.name-row .caret {
  margin-top: 3px;
}

.name {
  width: 62px;
  height: 10px;
  background: #4e4e4a;
  border: 1px solid #cabb28;
  color: #827e74;
  font-size: 7.5px;
  font-weight: bold;
  line-height: 8.5px;
  text-align: center;
}

.rec-row {
  display: flex;
  gap: 7.4px;
  padding: 1px 0 0 5.7px;
}

.sq {
  width: 9px;
  height: 9px;
  background: rgba(95, 80, 95, 0.85);
  color: #fff;
  font-size: 7.5px;
  font-weight: bold;
  line-height: 9px;
  text-align: center;
}

.sq.rec {
  background: #40302c;
  padding: 2px;
}

.sq.rec i {
  display: block;
  width: 5px;
  height: 5px;
  border-radius: 50%;
  background: #fff;
}

.sq.solo {
  background: #cfc038;
}

.soft {
  background: linear-gradient(rgba(118, 104, 118, 0.75), rgba(88, 82, 88, 0.8));
  color: rgba(190, 180, 185, 0.75);
  font-size: 6px;
  font-weight: bold;
  height: 9px;
  line-height: 9px;
  text-align: center;
  border-radius: 1px;
  position: relative;
}

.soft .caret {
  position: absolute;
  right: 1px;
  top: 1.5px;
}

.view {
  width: 65px;
  margin: 3px 0 0 2.5px;
}

.auto-row {
  display: flex;
  align-items: center;
  gap: 3px;
  margin-top: 2.5px;
  padding-left: 3px;
}

.star {
  width: 5px;
  font-size: 6px;
  color: rgba(230, 180, 180, 0.5);
}

.dyn {
  width: 18px;
}

.read {
  width: 36px;
  color: #38b074;
}

.elastic {
  width: 65px;
  height: 9px;
  margin: 2.5px 0 0 2px;
  background: rgba(0, 0, 0, 0.08);
  display: flex;
  align-items: center;
  gap: 3px;
}

.clock-box {
  width: 7px;
  height: 9px;
  padding: 2px 1px;
  background: #55687c;
}

.clock-box .clock {
  display: block;
  width: 5px;
  height: 5px;
  border-right-width: 1px;
}

.meter {
  width: 8px;
  padding: 1px 2px 1px 1px;
}

.meter-bar {
  height: 82px;
  width: 5px;
  background: rgba(40, 36, 0, 0.85);
  border: 1px solid rgba(0, 0, 0, 0.6);
  position: relative;
}

.level {
  position: absolute;
  left: 0;
  right: 0;
  bottom: 0;
  background: #28b014;
}

.peak {
  position: absolute;
  left: 0;
  right: 0;
  height: 1px;
  background: #c89820;
}

.io {
  width: 58px;
  padding: 2.5px 2px 0 7px;
  border-left: 1px solid rgba(0, 0, 0, 0.4);
}

.io-out {
  display: flex;
  gap: 1px;
  margin-top: 2px;
}

.io-out .io-btn {
  width: 42px;
}

.pin {
  width: 6px;
  padding-top: 1px;
}

.lcd {
  background: #000;
  margin-top: 5.5px;
  padding: 1px 4px;
  color: #58e8a0;
  font-size: 6px;
  font-weight: bold;
}

.lcd div {
  display: flex;
  justify-content: space-between;
  line-height: 8.2px;
}

.panner {
  width: 21px;
  height: 21px;
  margin-left: 14px;
  background: repeating-linear-gradient(90deg, transparent 0 4px, #062c14 4px 5px), repeating-linear-gradient(#000 0 4px, #062c14 4px 5px);
  position: relative;
}

.panner i {
  position: absolute;
  width: 2px;
  height: 2px;
  background: #d8f040;
}

.scale {
  width: 9px;
  margin-left: 1px;
  height: 85px;
  background: #2a2a2a;
  padding: 23px 1px 0 4px;
}

.scale i {
  display: block;
  height: 40px;
  background: repeating-linear-gradient(#666 0 1px, transparent 1px 4.6px);
}

.lane {
  background: #121212;
}

.lane-line {
  stroke: #505050;
}

.start-line {
  stroke: #a8a428;
}

.red {
  --body: #9a1400;
  --side: #7c1c18;
}

.orange {
  --body: #b84a00;
  --side: #b45820;
}

.yellow {
  --body: #c2c400;
  --side: #a8a828;
}

.lime {
  --body: #2c8000;
  --side: #347820;
}

.blue {
  --body: #1028d8;
  --side: #3020b0;
}

.pink {
  --body: #c02cc0;
  --side: #a828ac;
}

.yellow .name {
  color: #77776c;
}

.blue .name {
  color: #646460;
}

.pink .name {
  background: #e4e4d8;
  color: #111;
}

/* bottom bar */
.footer {
  height: 11px;
  margin-top: 1px;
  background: #1c1c1c;
  display: flex;
  align-items: center;
}

.foot-plus {
  width: 80px;
  padding-left: 3px;
  color: #888;
}

.play {
  width: 75px;
  color: #58c838;
  font-size: 6.7px;
  font-weight: bold;
}

.hscroll {
  flex: 1;
  height: 5px;
  background: #161616;
}

.hscroll i {
  display: block;
  width: 594px;
  height: 5px;
  border-radius: 2px;
  background: #333;
}

.foot-btns {
  display: flex;
  gap: 0.5px;
  width: 48px;
}

.foot-btns span {
  width: 9.2px;
  height: 9px;
  background: #2c2c2c;
  color: #999;
  text-align: center;
  line-height: 9px;
}

.playhead {
  position: absolute;
  left: 950px;
  top: 0;
  width: 6px;
  height: 547px;
  border-right: 1px solid #f4f0f0;
}

.playhead::after {
  content: "";
  position: absolute;
  left: 3px;
  top: 11px;
  bottom: 0;
  width: 1px;
  background: rgba(255, 255, 255, 0.35);
}

.playhead svg {
  margin-left: -1px;
}

.playhead path {
  fill: #38a0e0;
}

.rail {
  width: 9px;
  height: 549px;
  display: flex;
  flex-direction: column;
  background: #1a1a1a;
}

.rail-top {
  height: 11px;
  margin-bottom: 11px;
  background: #333;
}

.rail-key rect {
  fill: #c8a020;
}

.rail-btn {
  height: 10px;
  margin-top: 0.5px;
  background: #2e2e2e;
  color: #999;
  line-height: 10px;
  text-align: center;
}

.vscroll {
  flex: 1;
  padding: 4px 3px 46px;
}

.vscroll i {
  display: block;
  height: 100%;
  border-radius: 2px;
  background: #363636;
}
</style>
